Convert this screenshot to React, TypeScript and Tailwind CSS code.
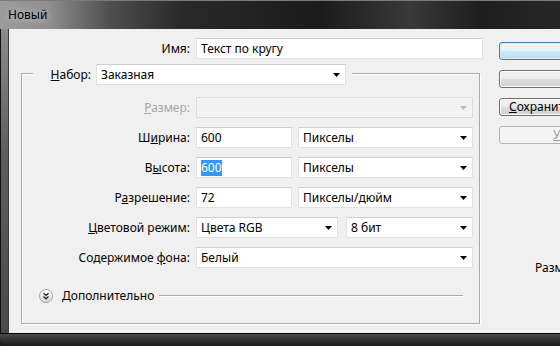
import React from "react";

function Arrow({ disabled }: { disabled?: boolean }) {
  return (
    <svg width="7" height="4" viewBox="0 0 7 4" className="shrink-0">
      <path d="M0 0H7L3.5 4Z" fill={disabled ? "#b9b9b9" : "#000"} />
    </svg>
  );
}

function Combo({
  children,
  className,
  disabled,
}: {
  children?: React.ReactNode;
  className: string;
  disabled?: boolean;
}) {
  return (
    <div
      className={`h-[21px] flex items-center justify-between border pl-[4px] pr-[5px] ${
        disabled
          ? "bg-[#f2f2f2] border-[#dadada]"
          : "bg-white border-[#e2e2e2] border-t-[#d0d0d0]"
      } ${className}`}
    >
      <span className="whitespace-nowrap">{children}</span>
      <Arrow disabled={disabled} />
    </div>
  );
}

function Input({ children, className }: { children?: React.ReactNode; className: string }) {
  return (
    <div
      className={`h-[21px] flex items-center bg-white border border-[#e2e2e2] border-t-[#cdcdcd] pl-[4px] ${className}`}
    >
      {children}
    </div>
  );
}

function Row({ label, children, disabled }: { label: React.ReactNode; children: React.ReactNode; disabled?: boolean }) {
  return (
    <div className="flex items-center h-[21px]">
      <div className={`w-[168px] text-right whitespace-nowrap ${disabled ? "text-[#a8a8a8]" : ""}`}>{label}</div>
      <div className="ml-[6px] flex">{children}</div>
    </div>
  );
}

function Button({
  children,
  primary,
  disabled,
  pad,
}: {
  children: React.ReactNode;
  primary?: boolean;
  disabled?: boolean;
  pad: string;
}) {
  const base = "w-[130px] h-[18px] rounded-[3px] border flex items-center whitespace-nowrap overflow-hidden";
  const skin = disabled
    ? "border-[#b5b5b5] bg-[#f4f4f4] text-[#9a9a9a]"
    : primary
    ? "border-[#3c7fb1] bg-[linear-gradient(#eaf6fd_0%,#e2f2fb_50%,#cfe8f6_51%,#bcdcef_100%)] shadow-[inset_0_0_0_1px_#d2eefa]"
    : "border-[#707070] bg-[linear-gradient(#f2f2f2_0%,#ebebeb_50%,#dddddd_51%,#cfcfcf_100%)] shadow-[inset_0_0_0_1px_#fcfcfc]";
  return <div className={`${base} ${skin} ${pad}`}>{children}</div>;
}

function Expander() {
  return (
    <svg width="14" height="14" viewBox="0 0 14 14" className="shrink-0">
      <defs>
        <linearGradient id="eg" x1="0" y1="0" x2="0" y2="1">
          <stop offset="0" stopColor="#ffffff" />
          <stop offset="1" stopColor="#d8d8d8" />
        </linearGradient>
      </defs>
      <circle cx="7" cy="7" r="6.5" fill="url(#eg)" stroke="#a5a5a5" />
      <path d="M4.5 4.2L7 6.4L9.5 4.2M4.5 7.6L7 9.8L9.5 7.6" fill="none" stroke="#222" strokeWidth="1.3" />
    </svg>
  );
}

export default function App() {
  return (
    <div className="w-[560px] h-[346px] overflow-hidden flex flex-col bg-[#1c1c1c] text-[12px] leading-[16px] text-black font-['Noto_Sans',sans-serif]">
      {/* title bar */}
      <div className="h-[29px] shrink-0 flex items-center pl-[8px] border-t border-[#7a7a7a] bg-[linear-gradient(to_right,#9c9c9c_0px,#8e8e8e_50px,#4e4e4e_110px,#2a2a2a_180px,#1b1b1b_320px,#393939_410px,#1e1e1e_480px,#272727_560px)]">
        <span className="[text-shadow:0_0_6px_#c8c8c8,0_0_10px_#b0b0b0] text-black">Новый</span>
      </div>

      <div className="h-[304px] shrink-0 flex">
        {/* left frame */}
        <div className="w-[9px] shrink-0 border-l border-[#111] border-r border-r-[#3a3a3a] bg-[linear-gradient(#8c8c8c,#5e5e5e_40%,#4a4a4a)]" />

        {/* client */}
        <div className="flex-1 bg-[#f0f0f0] flex">
          <div className="w-[474px] shrink-0 flex flex-col">
            {/* name row */}
            <div className="mt-[9px] flex items-center h-[21px]">
              <div className="w-[181px] text-right">Имя:</div>
              <Input className="ml-[6px] w-[287px]">Текст по кругу</Input>
            </div>

            {/* group box */}
            <div className="relative ml-[12px] mt-[14px] w-[459px] h-[251px] border border-[#a9a9a9] shadow-[inset_1px_1px_0_#ffffff,1px_1px_0_#ffffff]">
              <div className="absolute top-[-10px] left-[11px] flex items-center bg-[#f0f0f0] pr-[6px]">
                <div className="w-[58px] text-right">
                  <span className="underline">Н</span>абор:
                </div>
                <Combo className="ml-[5px] w-[250px]">Заказная</Combo>
              </div>

              <div className="pt-[23px] flex flex-col gap-[9px]">
                <Row
                  disabled
                  label={
                    <>
                      <span className="underline">Р</span>азмер:
                    </>
                  }
                >
                  <Combo disabled className="w-[277px]" />
                </Row>
                <Row
                  label={
                    <>
                      Ш<span className="underline">и</span>рина:
                    </>
                  }
                >
                  <Input className="w-[96px]">600</Input>
                  <Combo className="ml-[6px] w-[175px]">Пикселы</Combo>
                </Row>
                <Row
                  label={
                    <>
                      В<span className="underline">ы</span>сота:
                    </>
                  }
                >
                  <Input className="w-[96px]">
                    <span className="bg-[#3399ff] text-white">600</span>
                  </Input>
                  <Combo className="ml-[6px] w-[175px]">Пикселы</Combo>
                </Row>
                <Row
                  label={
                    <>
                      Р<span className="underline">а</span>зрешение:
                    </>
                  }
                >
                  <Input className="w-[96px]">72</Input>
                  <Combo className="ml-[6px] w-[175px]">Пикселы/дюйм</Combo>
                </Row>
                <Row
                  label={
                    <>
                      <span className="underline">Ц</span>ветовой режим:
                    </>
                  }
                >
                  <Combo className="w-[142px]">Цвета RGB</Combo>
                  <Combo className="ml-[8px] w-[127px]">8 бит</Combo>
                </Row>
                <Row
                  label={
                    <>
                      Содержимое <span className="underline">ф</span>она:
                    </>
                  }
                >
                  <Combo className="w-[277px]">Белый</Combo>
                </Row>
              </div>

              <div className="mt-[21px] h-[14px] flex items-center pl-[17px] pr-[16px]">
                <Expander />
                <span className="ml-[9px] whitespace-nowrap">Дополнительно</span>
                <div className="ml-[5px] flex-1 h-[2px] border-t border-[#a9a9a9] border-b border-b-white" />
              </div>
            </div>
          </div>

          {/* buttons column */}
          <div className="ml-[16px] pt-[13px] flex flex-col gap-[10px] shrink-0">
            <Button primary pad="pl-[80px]">OK</Button>
            <Button pad="pl-[80px]">Отмена</Button>
            <Button pad="pl-[9px]">
              <span className="underline">С</span>охранить стиль...
            </Button>
            <Button disabled pad="pl-[53px]">
              <span className="underline">У</span>далить стиль...
            </Button>
            <div className="mt-[106px] pl-[36px] whitespace-nowrap">Размер изображения: 1,03M</div>
          </div>
        </div>
      </div>

      {/* bottom frame */}
      <div className="h-[13px] shrink-0 border-t border-[#000] bg-[linear-gradient(#4a4a4a,#2e2e2e_60%,#1a1a1a)] rounded-bl-[6px]" />
    </div>
  );
}
